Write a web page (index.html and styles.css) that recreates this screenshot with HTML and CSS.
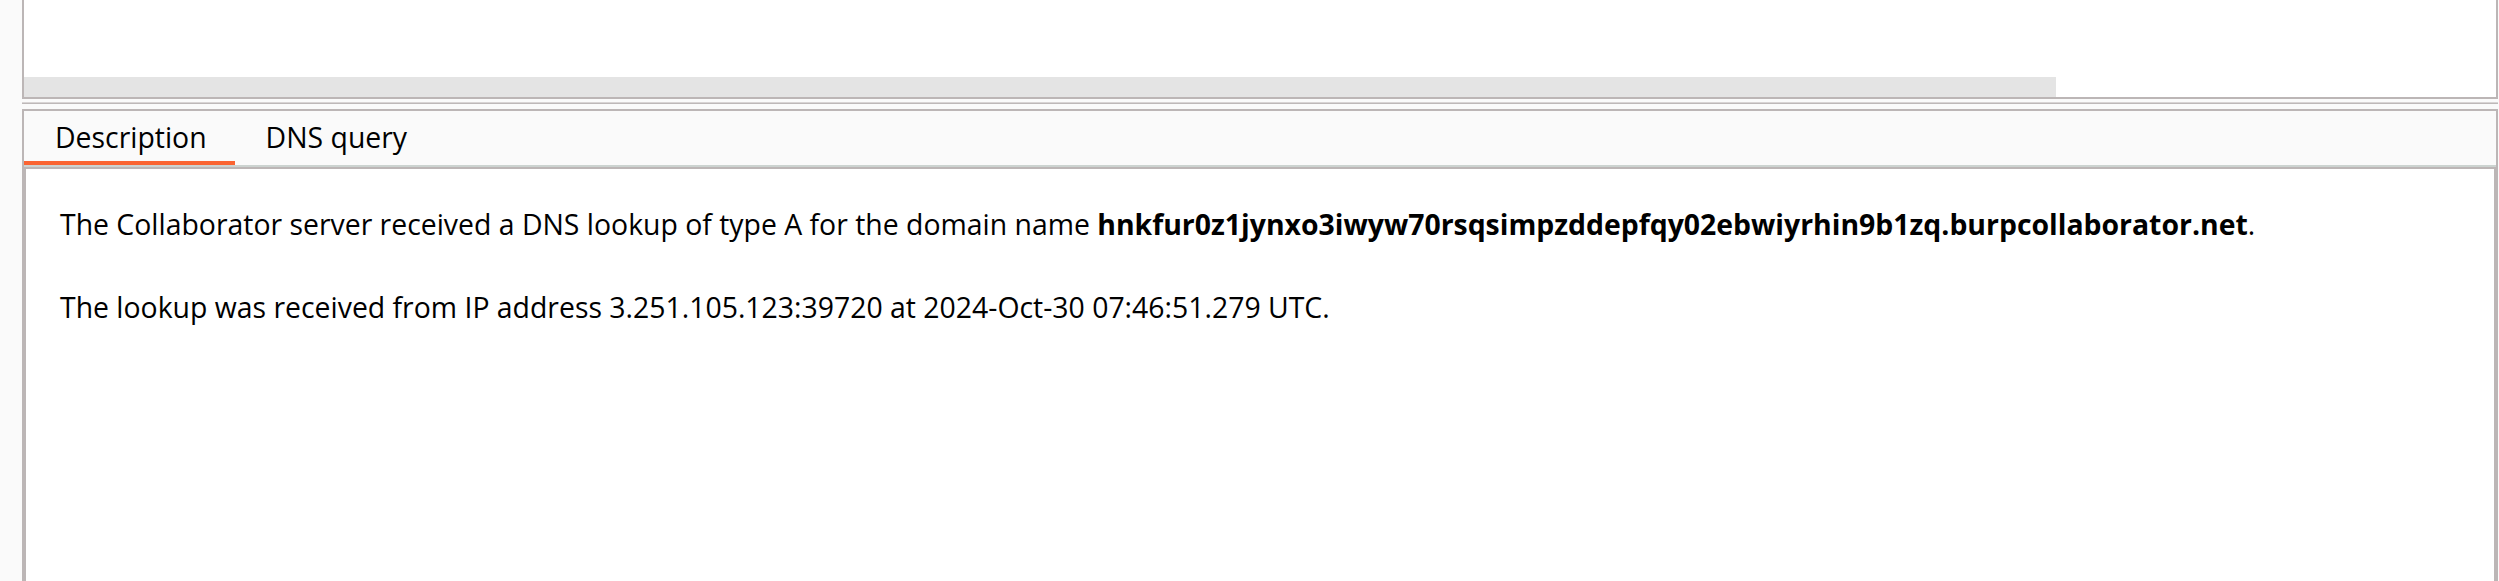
FILE: index.html
```html
<!DOCTYPE html>
<html>
<head>
<meta charset="utf-8">
<link rel="stylesheet" href="styles.css">
</head>
<body>
<div class="app">
  <div class="top-pane">
    <div class="hscroll"><div class="hthumb"></div></div>
  </div>
  <div class="divider"></div>
  <div class="bottom-pane">
    <div class="tabs">
      <div class="tab active">Description</div>
      <div class="tab">DNS query</div>
    </div>
    <div class="content">
      <p>The Collaborator server received a DNS lookup of type A for the domain name <b>hnkfur0z1jynxo3iwyw70rsqsimpzddepfqy02ebwiyrhin9b1zq.burpcollaborator.net</b>.</p>
      <p>The lookup was received from IP address 3.251.105.123:39720 at 2024-Oct-30 07:46:51.279 UTC.</p>
    </div>
  </div>
</div>
</body>
</html>
```
FILE: styles.css
```css
html, body {
  margin: 0;
  padding: 0;
}
body {
  width: 2499px;
  height: 581px;
  overflow: hidden;
  background: #fafafa;
  font-family: "Open Sans", "Noto Sans", sans-serif;
  color: #000;
}
.app {
  display: flex;
  flex-direction: column;
  height: 581px;
  padding: 0 1px 0 22px;
  box-sizing: border-box;
}
.top-pane {
  height: 97px;
  flex: none;
  background: #fff;
  border: 2px solid #bcb6b6;
  border-top: 0;
  display: flex;
  flex-direction: column;
  justify-content: flex-end;
}
.hscroll {
  height: 20px;
}
.hthumb {
  width: 2032px;
  height: 20px;
  background: #e4e4e4;
}
.divider {
  flex: none;
  margin: 3px 0 5px;
  border-top: 1px solid #d8d4d4;
  border-bottom: 1px solid #bdb8b8;
}
.bottom-pane {
  flex: 1;
  display: flex;
  flex-direction: column;
  border: 2px solid #bcb6b6;
  border-bottom: 0;
  background: #fafafa;
  min-height: 0;
}
.tabs {
  display: flex;
  flex: none;
  border-bottom: 2px solid #ccd3d0;
}
.tab {
  padding: 2px 28px 0 31px;
  line-height: 48px;
  font-size: 28.4px;
  border-bottom: 4px solid transparent;
  white-space: nowrap;
}
.tab.active {
  border-bottom-color: #fa6432;
}
.content {
  flex: 1;
  background: #fff;
  border: 2px solid #bcb6b6;
  border-bottom: 0;
  padding: 38px 34px;
  font-size: 28.4px;
  line-height: 34px;
  white-space: nowrap;
}
.content p {
  margin: 0 0 49px;
}
.content b {
  font-weight: 700;
}
```
